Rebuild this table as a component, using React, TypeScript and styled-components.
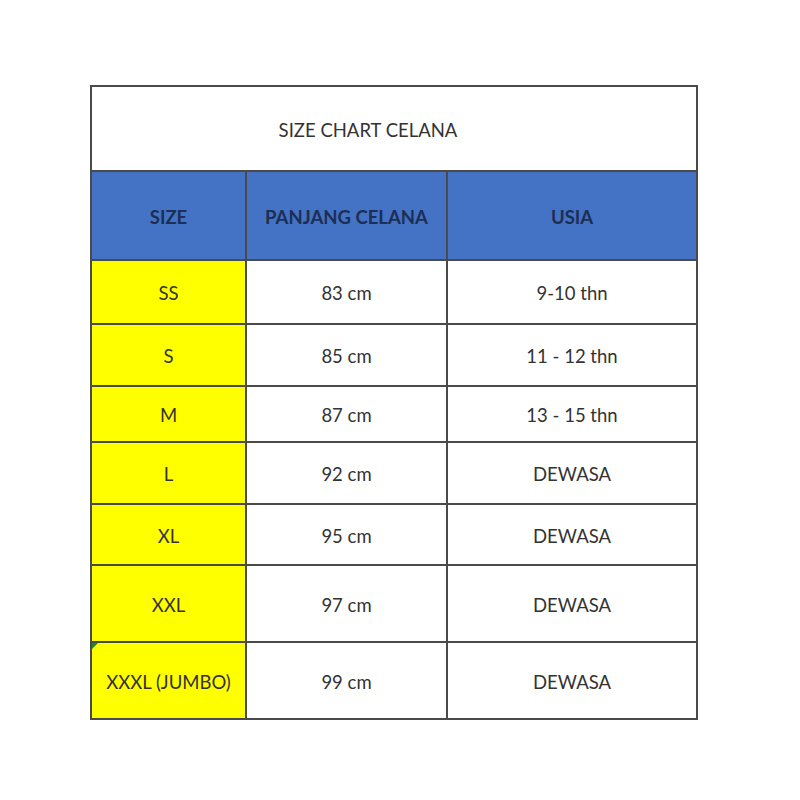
import styled, { createGlobalStyle } from 'styled-components';

const GlobalStyle = createGlobalStyle`
  html, body {
    margin: 0;
    padding: 0;
    background: #ffffff;
  }
`;

interface IRow {
  size: string;
  length: string;
  age: string;
  height: number;
  flagged?: boolean;
}

const rows: IRow[] = [
  { size: 'SS', length: '83 cm', age: '9-10 thn', height: 62 },
  { size: 'S', length: '85 cm', age: '11 - 12 thn', height: 60 },
  { size: 'M', length: '87 cm', age: '13 - 15 thn', height: 54 },
  { size: 'L', length: '92 cm', age: 'DEWASA', height: 60 },
  { size: 'XL', length: '95 cm', age: 'DEWASA', height: 59 },
  { size: 'XXL', length: '97 cm', age: 'DEWASA', height: 75 },
  { size: 'XXXL (JUMBO)', length: '99 cm', age: 'DEWASA', height: 75, flagged: true },
];

const App = () => {
  const rowHeights = [83, 87, ...rows.map((row) => row.height)]
    .map((h) => `${h}px`)
    .join(' ');

  return (
    <>
      <GlobalStyle />
      <Page>
        <Sheet style={{ gridTemplateRows: rowHeights }}>
          <TitleCell>SIZE CHART CELANA</TitleCell>
          <HeadCell>SIZE</HeadCell>
          <HeadCell>PANJANG CELANA</HeadCell>
          <HeadCell>USIA</HeadCell>
          {rows.map((row) => (
            <Row key={row.size}>
              <SizeCell $flagged={row.flagged}>{row.size}</SizeCell>
              <Cell>{row.length}</Cell>
              <Cell>{row.age}</Cell>
            </Row>
          ))}
        </Sheet>
      </Page>
    </>
  );
};

const Page = styled.div`
  padding: 85px 0 0 90px;
  font-family: Lato, 'Open Sans', 'Liberation Sans', sans-serif;
`;

const Sheet = styled.div`
  display: grid;
  grid-template-columns: 153px 199px 248px;
  gap: 2px;
  padding: 2px;
  width: max-content;
  background-color: #4a4a4a;
`;

const Row = styled.div`
  display: contents;
`;

const Cell = styled.div`
  display: flex;
  align-items: center;
  justify-content: center;
  background-color: #ffffff;
  color: #333333;
  font-size: 18.5px;
  padding-top: 2px;
  white-space: nowrap;
`;

const TitleCell = styled(Cell)`
  grid-column: 1 / -1;
  padding-right: 52px;
  padding-top: 3px;
`;

const HeadCell = styled(Cell)`
  background-color: #4472c4;
  color: #1c2f55;
  font-weight: 700;
  padding-top: 3px;
`;

const SizeCell = styled(Cell)<{ $flagged?: boolean }>`
  position: relative;
  background-color: #ffff00;
  color: #333333;

  &::before {
    content: '';
    display: ${({ $flagged }) => ($flagged ? 'block' : 'none')};
    position: absolute;
    top: 0;
    left: 0;
    border-top: 6px solid #1a8a2e;
    border-right: 6px solid transparent;
  }
`;

export default App;
